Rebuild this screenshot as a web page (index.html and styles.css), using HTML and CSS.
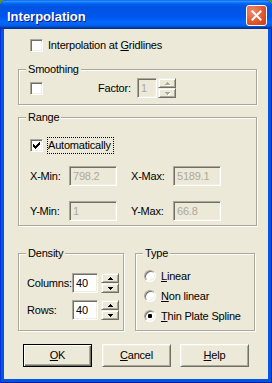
FILE: index.html
```html
<!DOCTYPE html>
<html>
<head>
<meta charset="utf-8">
<link rel="stylesheet" href="styles.css">
</head>
<body>
<div class="window">
  <div class="titlebar">
    <span class="title">Interpolation</span>
    <span class="close"><svg width="11" height="11" viewBox="0 0 11 11"><path d="M1.5 1.5 L9.5 9.5 M9.5 1.5 L1.5 9.5" stroke="#fff" stroke-width="2" stroke-linecap="square"/></svg></span>
  </div>
  <div class="client">
    <div class="row top-row">
      <span class="check"></span><span class="lbl gap5">Interpolation at <u>G</u>ridlines</span>
    </div>

    <div class="group smoothing">
      <div class="gtitle">Smoothing</div>
      <div class="row smooth-row">
        <span class="check"></span>
        <span class="lbl factor-lbl">Factor:</span>
        <span class="field dis w20">1</span>
        <span class="spin dis sp1">
          <span class="sbtn"><svg width="5" height="3" viewBox="0 0 5 3"><path d="M2 0h1v1h1v1h1v1H0V2h1V1h1z"/></svg></span>
          <span class="sbtn"><svg width="5" height="3" viewBox="0 0 5 3"><path d="M0 0h5v1H4v1H3v1H2V2H1V1H0z"/></svg></span>
        </span>
      </div>
    </div>

    <div class="group range">
      <div class="gtitle">Range</div>
      <div class="row auto-row">
        <span class="check"><svg width="13" height="13" viewBox="0 0 13 13"><path d="M3 5h1v1h1v1h1V6h1V5h1V4h1V3h1v3H9v1H8v1H7v1H6v1H5V9H4V8H3z"/></svg></span>
        <span class="lbl focus">Automatically</span>
      </div>
      <div class="row xy-row xrow">
        <span class="lbl l1">X-Min:</span><span class="field dis w48">798.2</span>
        <span class="lbl l2">X-Max:</span><span class="field dis w48">5189.1</span>
      </div>
      <div class="row xy-row yrow">
        <span class="lbl l1">Y-Min:</span><span class="field dis w48">1</span>
        <span class="lbl l2">Y-Max:</span><span class="field dis w48">66.8</span>
      </div>
    </div>

    <div class="bottom">
      <div class="group density">
        <div class="gtitle">Density</div>
        <div class="row drow d1">
          <span class="lbl dl">Columns:</span><span class="field w26">40</span>
          <span class="spin sp2">
            <span class="sbtn"><svg width="5" height="3" viewBox="0 0 5 3"><path d="M2 0h1v1h1v1h1v1H0V2h1V1h1z"/></svg></span>
            <span class="sbtn"><svg width="5" height="3" viewBox="0 0 5 3"><path d="M0 0h5v1H4v1H3v1H2V2H1V1H0z"/></svg></span>
          </span>
        </div>
        <div class="row drow d2">
          <span class="lbl dl">Rows:</span><span class="field w26">40</span>
          <span class="spin sp2">
            <span class="sbtn"><svg width="5" height="3" viewBox="0 0 5 3"><path d="M2 0h1v1h1v1h1v1H0V2h1V1h1z"/></svg></span>
            <span class="sbtn"><svg width="5" height="3" viewBox="0 0 5 3"><path d="M0 0h5v1H4v1H3v1H2V2H1V1H0z"/></svg></span>
          </span>
        </div>
      </div>
      <div class="group type">
        <div class="gtitle">Type</div>
        <div class="radios">
          <div class="row rrow"><span class="radio"></span><span class="lbl gap5"><u>L</u>inear</span></div>
          <div class="row rrow"><span class="radio"></span><span class="lbl gap5"><u>N</u>on linear</span></div>
          <div class="row rrow"><span class="radio on"></span><span class="lbl gap5"><u>T</u>hin Plate Spline</span></div>
        </div>
      </div>
    </div>

    <div class="buttons">
      <span class="btn default"><span><u>O</u>K</span></span>
      <span class="btn b-cancel"><span><u>C</u>ancel</span></span>
      <span class="btn b-help"><span><u>H</u>elp</span></span>
    </div>
  </div>
</div>
</body>
</html>
```

FILE: styles.css
```css
* { box-sizing: border-box; }
html, body { margin: 0; padding: 0; }
body {
  width: 272px;
  height: 383px;
  overflow: hidden;
  background: #5a8f3c;
  font-family: "Liberation Sans", Arial, sans-serif;
  font-size: 11px;
  letter-spacing: -0.2px;
  color: #000;
}
u { text-decoration: underline; text-underline-offset: 1px; }

.window {
  width: 272px;
  height: 383px;
  display: flex;
  flex-direction: column;
  background: #0055e5;
  border-radius: 7px 7px 0 0;
  box-shadow: inset 1px 0 #0831d9, inset -1px 0 #001ea0, inset 0 -1px #001ea0;
  overflow: hidden;
}

.titlebar {
  height: 29px;
  flex: none;
  display: flex;
  align-items: center;
  justify-content: space-between;
  padding: 0 5px 0 7px;
  background: linear-gradient(to bottom, #0058ee 0%, #3593ff 4%, #288eff 6%, #127dff 8%, #036ffc 10%, #0262ee 14%, #0057e5 20%, #0054e3 24%, #0055eb 56%, #005bf5 66%, #026afe 76%, #0062ef 86%, #0052d6 92%, #0040ab 94%, #003092 100%);
}
.title {
  color: #fff;
  font-weight: bold;
  font-size: 13px;
  letter-spacing: 0;
  text-shadow: 1px 1px #0a1883;
  margin-top: 3px;
}
.close {
  width: 21px;
  height: 21px;
  margin-top: 2px;
  border: 1px solid #fff;
  border-radius: 3px;
  background: radial-gradient(circle at 30% 30%, #f08c6c 0%, #e0592f 55%, #c63a16 100%);
  display: flex;
  align-items: center;
  justify-content: center;
}

.client {
  flex: 1;
  margin: 0 4px 4px;
  background: #ece9d8;
  padding: 10px 11px 0 14px;
}

.row { display: flex; align-items: center; }
.lbl { line-height: 13px; white-space: nowrap; flex: none; }
.gap5 { margin-left: 5px; }

.top-row { height: 13px; padding-left: 12px; }

.check {
  width: 13px;
  height: 13px;
  flex: none;
  background: #fff;
  border: 1px solid;
  border-color: #aca899 #fff #fff #aca899;
  box-shadow: inset 1px 1px #716f64, inset -1px -1px #f1efe2;
  position: relative;
}
.check svg { display: block; margin: -1px; }

.group {
  border: 1px solid #aca899;
  box-shadow: inset 1px 1px #fff, 1px 1px #fff;
}
.gtitle {
  width: max-content;
  margin: -7px 0 0 7px;
  padding: 0 2px;
  line-height: 13px;
  background: #ece9d8;
}

.smoothing { margin-top: 17px; height: 36px; }
.smooth-row { margin-top: 2px; height: 20px; padding-left: 11px; }
.factor-lbl { margin-left: 55px; width: 39px; }

.field {
  height: 20px;
  flex: none;
  border: 1px solid;
  border-color: #aca899 #fff #fff #aca899;
  box-shadow: inset 1px 1px #716f64, inset -1px -1px #f1efe2;
  background: #fff;
  padding: 0 3px;
  line-height: 18px;
  white-space: nowrap;
  overflow: hidden;
}
.field.dis { background: #ece9d8; color: #aca899; }
.w20 { width: 20px; }
.w26 { width: 26px; }
.w48 { width: 48px; }

.spin {
  width: 18px;
  height: 20px;
  flex: none;
  display: flex;
  flex-direction: column;
}
.sp1 { margin-left: 1px; }
.sp2 { margin-left: 3px; }
.sbtn {
  height: 10px;
  display: flex;
  align-items: center;
  justify-content: center;
  background: #ece9d8;
  border: 1px solid;
  border-color: #f1efe2 #716f64 #716f64 #f1efe2;
  box-shadow: inset 1px 1px #fff, inset -1px -1px #aca899;
}
.sbtn svg { display: block; fill: #000; }
.spin.dis .sbtn svg { fill: #aca899; filter: drop-shadow(1px 1px 0 #fff); }

.range { margin-top: 12px; height: 109px; }
.auto-row { margin-top: 13px; height: 17px; padding-left: 11px; }
.focus {
  margin-left: 4px;
  border: 1px dotted #000;
  padding: 1px 2px 1px 0;
  line-height: 13px;
}
.xy-row { height: 20px; padding-left: 11px; }
.xrow { margin-top: 12px; }
.yrow { margin-top: 15px; }
.l1 { width: 39px; }
.l2 { width: 42px; margin-left: 14px; }

.bottom { display: flex; margin-top: 27px; height: 78px; }
.density { width: 106px; height: 78px; flex: none; }
.type { width: 120px; height: 78px; margin-left: 11px; flex: none; }
.drow { height: 20px; padding-left: 8px; }
.d1 { margin-top: 13px; }
.d2 { margin-top: 7px; }
.dl { width: 45px; }

.radios { padding-left: 8px; margin-top: 6px; }
.rrow { height: 20px; }
.radio {
  width: 12px;
  height: 12px;
  flex: none;
  border-radius: 50%;
  background: #fff;
  border: 1px solid;
  border-color: #aca899 #fff #fff #aca899;
  box-shadow: inset 1px 1px #716f64, inset -1px -1px #f1efe2;
  display: flex;
  align-items: center;
  justify-content: center;
}
.radio.on::after {
  content: "";
  width: 4px;
  height: 4px;
  border-radius: 1px;
  background: #000;
}

.buttons { display: flex; margin-top: 13px; padding-left: 5px; }
.btn {
  width: 69px;
  height: 23px;
  flex: none;
  display: flex;
  align-items: center;
  justify-content: center;
  background: #ece9d8;
  border: 1px solid;
  border-color: #fff #716f64 #716f64 #fff;
  box-shadow: inset 1px 1px #f1efe2, inset -1px -1px #aca899;
  line-height: 13px;
}
.btn.default {
  border-color: #000;
  box-shadow: inset 1px 1px #fff, inset -1px -1px #716f64, inset -2px -2px #aca899;
}
.b-cancel { margin-left: 10px; }
.b-help { margin-left: 9px; }
```
